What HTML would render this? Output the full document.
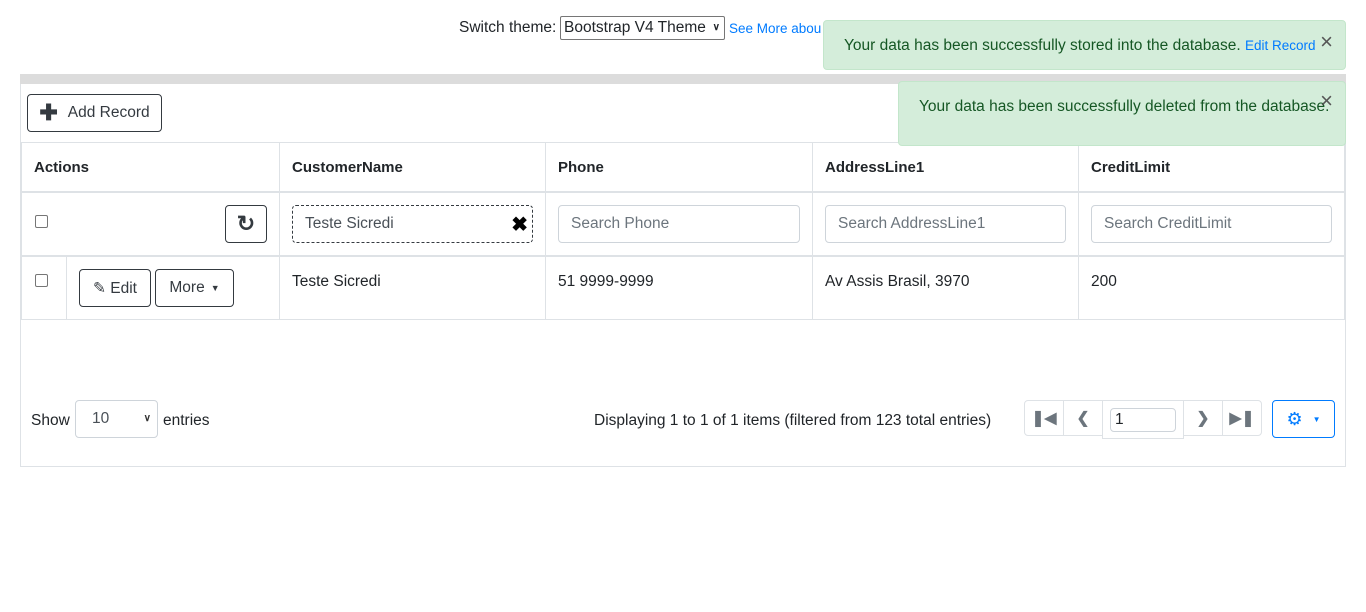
<!DOCTYPE html>
<html><head><style>
*{box-sizing:border-box}
body{margin:0;width:1366px;height:612px;background:#fff;font-family:"Liberation Sans",sans-serif;font-size:15.5px;color:#212529;position:relative;overflow:hidden}
.abs{position:absolute}
.btn{position:absolute;border:1px solid #343a40;border-radius:4px;background:#fff;color:#343a40;display:flex;align-items:center;justify-content:center}
.inp{position:absolute;border:1px solid #ced4da;border-radius:4px;height:38px;padding-left:12px;display:flex;align-items:center;color:#6c757d}
.th{position:absolute;top:159px;font-weight:bold;color:#212529;font-size:15px}
.vl{position:absolute;width:1px;background:#dee2e6}
.hl{position:absolute;left:22px;width:1323px;background:#dee2e6}
.cb{position:absolute;width:13px;height:13px;border:1px solid #767676;border-radius:2px;background:#fff}
.alert{position:absolute;background:#d4edda;border:1px solid #c3e6cb;border-radius:4px;color:#155724}
.pg{position:absolute;top:400px;height:36px;border:1px solid #dee2e6;background:#fff;color:#6c757d;display:flex;align-items:center;justify-content:center;font-weight:bold}
</style></head><body>
<div class="abs" style="left:459px;top:19px">Switch theme:</div>
<div class="abs" style="left:560px;top:16px;width:165px;height:24px;border:1px solid #767676;border-radius:2px;padding-left:3px;line-height:22px">Bootstrap V4 Theme <span style="position:absolute;right:4px;font-size:10px;font-weight:bold">&#8744;</span></div>
<div class="abs" style="left:729px;top:21px;color:#007bff;font-size:13.5px">See More abou</div>

<div class="abs" style="left:20px;top:74px;width:1326px;height:393px;border:1px solid #dee2e6"></div>
<div class="abs" style="left:20px;top:74px;width:1326px;height:10px;background:#dcdcdc"></div>

<div class="btn" style="left:27px;top:94px;width:135px;height:38px"><b style="font-size:22px;margin-right:10px">&#10010;</b>Add Record</div>

<div class="hl" style="top:142px;height:1px"></div>
<div class="hl" style="top:191px;height:2px"></div>
<div class="hl" style="top:255px;height:2px"></div>
<div class="hl" style="top:319px;height:1px"></div>
<div class="vl" style="left:21px;top:142px;height:178px"></div>
<div class="vl" style="left:279px;top:142px;height:178px"></div>
<div class="vl" style="left:545px;top:142px;height:178px"></div>
<div class="vl" style="left:812px;top:142px;height:178px"></div>
<div class="vl" style="left:1078px;top:142px;height:178px"></div>
<div class="vl" style="left:1344px;top:142px;height:178px"></div>
<div class="vl" style="left:66px;top:257px;height:62px"></div>

<div class="th" style="left:34px">Actions</div>
<div class="th" style="left:292px">CustomerName</div>
<div class="th" style="left:558px">Phone</div>
<div class="th" style="left:825px">AddressLine1</div>
<div class="th" style="left:1091px">CreditLimit</div>

<div class="cb" style="left:35px;top:215px"></div>
<div class="btn" style="left:225px;top:205px;width:42px;height:38px;font-size:22px;font-weight:bold">&#8635;</div>
<div class="inp" style="left:292px;top:205px;width:241px;border:1px dashed #343a40;color:#495057">Teste Sicredi<span style="position:absolute;right:4px;font-size:20px;color:#000;font-weight:bold">&#10006;</span></div>
<div class="inp" style="left:558px;top:205px;width:242px">Search Phone</div>
<div class="inp" style="left:825px;top:205px;width:241px">Search AddressLine1</div>
<div class="inp" style="left:1091px;top:205px;width:241px">Search CreditLimit</div>

<div class="cb" style="left:35px;top:274px"></div>
<div class="btn" style="left:79px;top:269px;width:72px;height:38px">&#9998; Edit</div>
<div class="btn" style="left:155px;top:269px;width:79px;height:38px">More <span style="font-size:9px;margin-left:6px">&#9660;</span></div>
<div class="abs" style="left:292px;top:273px">Teste Sicredi</div>
<div class="abs" style="left:558px;top:273px">51 9999-9999</div>
<div class="abs" style="left:825px;top:273px">Av Assis Brasil, 3970</div>
<div class="abs" style="left:1091px;top:273px">200</div>

<div class="abs" style="left:31px;top:412px">Show</div>
<div class="abs" style="left:75px;top:400px;width:83px;height:38px;border:1px solid #ced4da;border-radius:4px;padding-left:16px;line-height:36px;color:#495057">10<span style="position:absolute;right:6px;font-size:10px;font-weight:bold;color:#333">&#8744;</span></div>
<div class="abs" style="left:163px;top:412px">entries</div>
<div class="abs" style="left:594px;top:412px">Displaying 1 to 1 of 1 items (filtered from 123 total entries)</div>
<div class="pg" style="left:1024px;width:40px;border-radius:4px 0 0 4px">&#10074;&#9664;</div>
<div class="pg" style="left:1063px;width:40px">&#10094;</div>
<div class="pg" style="left:1102px;width:82px;height:39px"><div style="width:66px;height:24px;border:1px solid #ced4da;border-radius:4px;color:#212529;font-weight:normal;padding-left:4px;line-height:22px">1</div></div>
<div class="pg" style="left:1183px;width:40px">&#10095;</div>
<div class="pg" style="left:1222px;width:40px;border-radius:0 4px 4px 0">&#9654;&#10074;</div>
<div class="abs" style="left:1272px;top:400px;width:63px;height:38px;border:1px solid #007bff;border-radius:4px;color:#007bff;display:flex;align-items:center;justify-content:center;font-size:18px">&#9881;<span style="font-size:8px;margin-left:10px">&#9660;</span></div>

<div class="alert" style="left:823px;top:20px;width:523px;height:50px"><span class="abs" style="left:20px;top:16px;white-space:nowrap">Your data has been successfully stored into the database. <span style="color:#007bff;font-size:13.5px">Edit Record</span></span><span class="abs" style="right:12px;top:8px;font-size:22px;color:#555">&#215;</span></div>
<div class="alert" style="left:898px;top:81px;width:448px;height:65px"><span class="abs" style="left:20px;top:16px;white-space:nowrap">Your data has been successfully deleted from the database.</span><span class="abs" style="right:12px;top:6px;font-size:22px;color:#555">&#215;</span></div>
</body></html>
